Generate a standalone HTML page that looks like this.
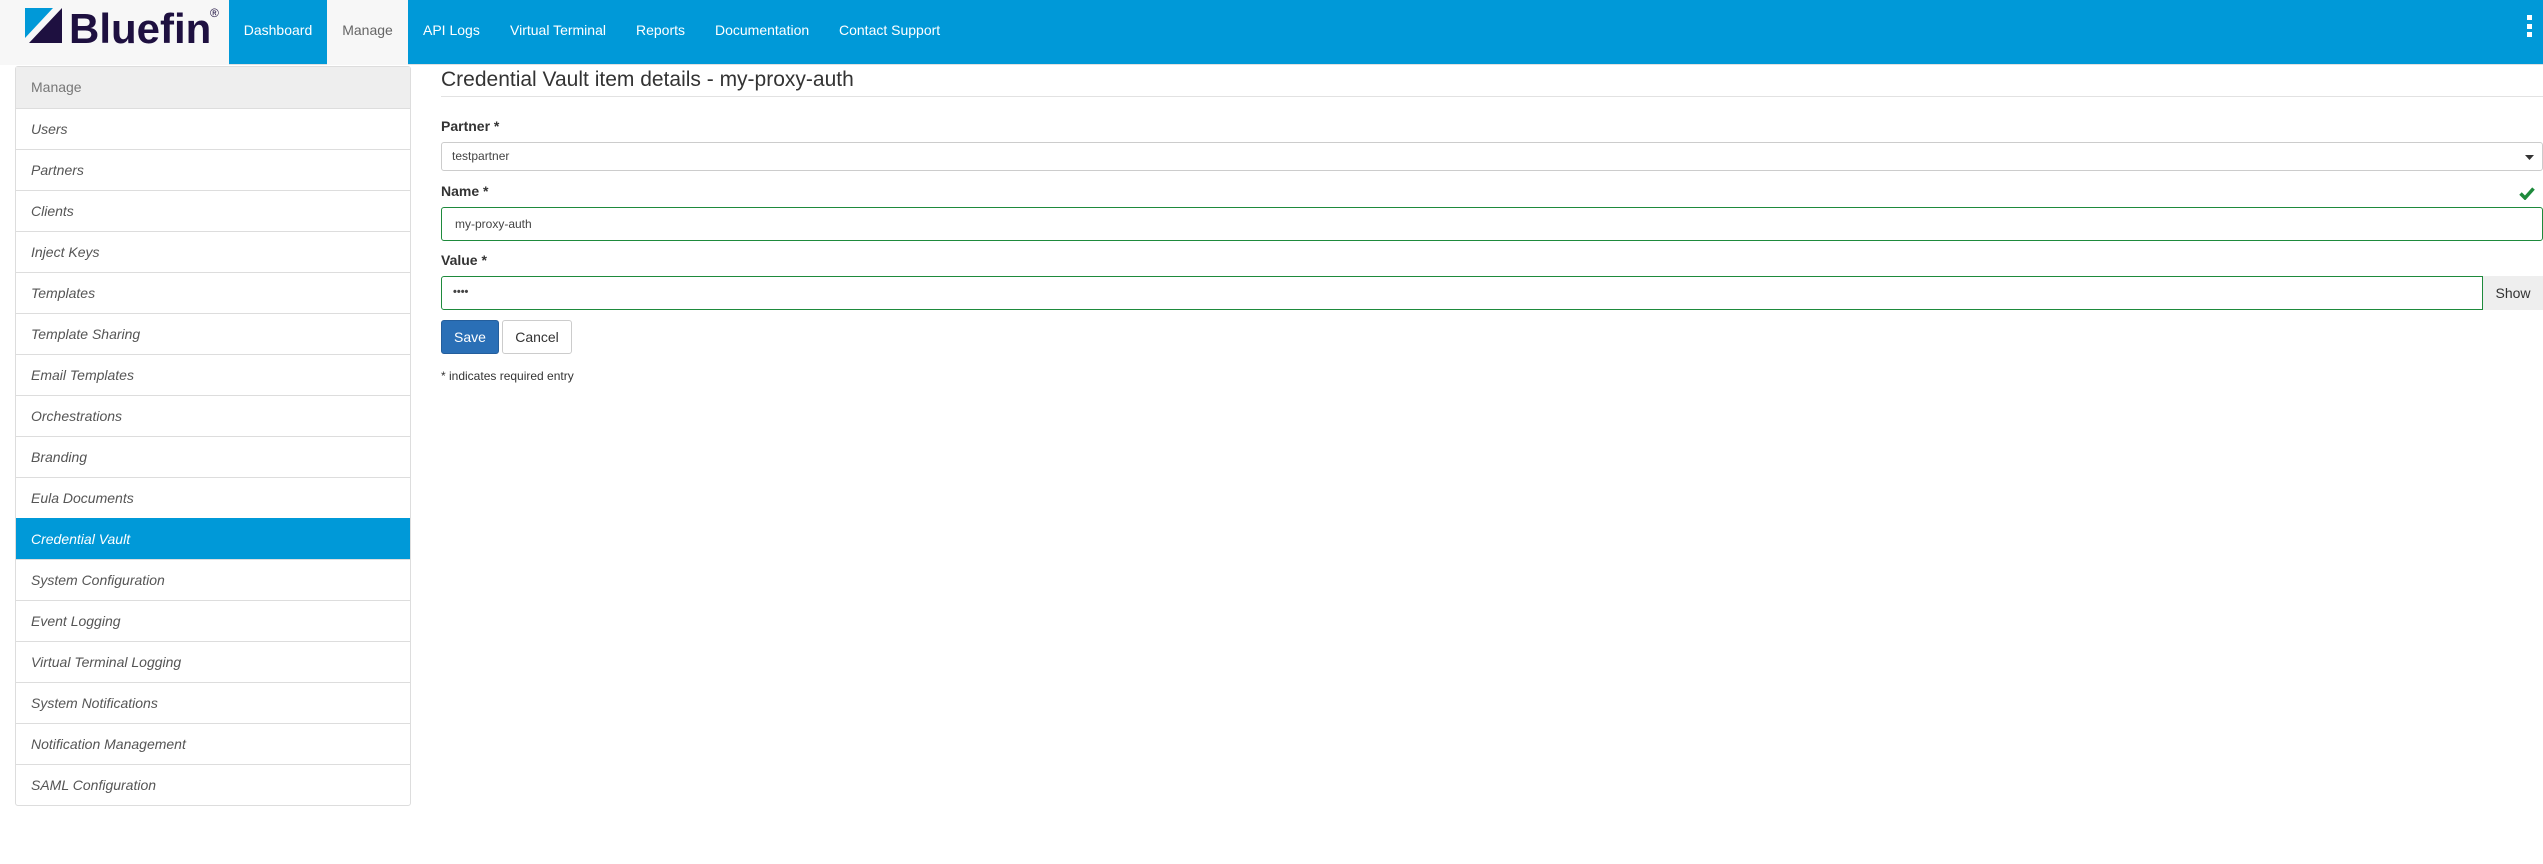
<!DOCTYPE html>
<html><head><meta charset="utf-8"><style>
*{box-sizing:border-box;margin:0;padding:0}
body{width:2543px;height:864px;background:#fff;font-family:"Liberation Sans",Arial,sans-serif;position:relative;overflow:hidden;color:#333}
.nav{position:absolute;left:0;top:0;width:2543px;height:65px;background:#0099d8;border-bottom:1px solid #e0e0e0}
.logo{position:absolute;left:0;top:0;width:229px;height:65px;background:#f7f7f7}
.brand{position:absolute;left:69px;top:5px;font-size:42px;font-weight:bold;color:#1e1040}
.reg{position:absolute;left:210px;top:6px;font-size:12px;color:#1e1040}
.ni{position:absolute;top:0;height:65px;line-height:60px;font-size:14px;color:#fff}
.manage{background:#f7f7f7;color:#666}
.dot{position:absolute;left:2527px;width:5px;height:5px;background:#fff}
.side{position:absolute;left:15px;top:66px;width:396px;border:1px solid #ddd;border-radius:3px}
.side div{height:41px;line-height:40px;padding-left:15px;font-size:14px;font-style:italic;color:#555;border-top:1px solid #ddd}
.side div:first-child{border-top:none;background:#eee;color:#777;font-style:normal}
.side div.act{background:#0099d8;color:#fff;border-color:#0099d8}
.title{position:absolute;left:441px;top:68px;font-size:21px;color:#333}
.hr{position:absolute;left:441px;top:96px;width:2102px;height:1px;background:#e2e2e2}
.lbl{position:absolute;left:441px;font-size:14px;font-weight:bold;color:#333}
.inp{position:absolute;left:441px;width:2102px;border:1px solid #ccc;border-radius:3px;font-size:12px;padding-left:11px;color:#444}
.ok{border-color:#1e8a3c}
.btn{position:absolute;top:320px;height:34px;line-height:32px;font-size:14px;border-radius:3px;text-align:center}
</style></head><body>
<div class="nav">
<div class="logo">
<svg style="position:absolute;left:25px;top:8px" width="37" height="35" viewBox="0 0 37 35"><polygon points="0,0 28,0 0,30" fill="#0099d8"/><polygon points="37,0 37,35 4,35" fill="#1e1040"/></svg>
<div class="brand">Bluefin</div><div class="reg">®</div>
</div>
<div class="ni" style="left:229px;width:98px;text-align:center">Dashboard</div>
<div class="ni manage" style="left:327px;width:81px;text-align:center">Manage</div>
<div class="ni" style="left:423px">API Logs</div>
<div class="ni" style="left:510px">Virtual Terminal</div>
<div class="ni" style="left:636px">Reports</div>
<div class="ni" style="left:715px">Documentation</div>
<div class="ni" style="left:839px">Contact Support</div>
<div class="dot" style="top:15px"></div><div class="dot" style="top:24px"></div><div class="dot" style="top:32px"></div>
</div>
<div class="side">
<div>Manage</div><div>Users</div><div>Partners</div><div>Clients</div><div>Inject Keys</div><div>Templates</div><div>Template Sharing</div><div>Email Templates</div><div>Orchestrations</div><div>Branding</div><div>Eula Documents</div><div class="act">Credential Vault</div><div>System Configuration</div><div>Event Logging</div><div>Virtual Terminal Logging</div><div>System Notifications</div><div>Notification Management</div><div>SAML Configuration</div>
</div>
<div class="title">Credential Vault item details - my-proxy-auth</div>
<div class="hr"></div>
<div class="lbl" style="top:118px">Partner *</div>
<div class="inp" style="top:142px;height:29px;line-height:27px;padding-left:10px">testpartner</div>
<svg style="position:absolute;left:2525px;top:155px" width="9" height="5"><polygon points="0,0 9,0 4.5,5" fill="#333"/></svg>
<div class="lbl" style="top:183px">Name *</div>
<svg style="position:absolute;left:2519px;top:187px" width="16" height="13" viewBox="0 0 16 13"><path d="M1.5 6.5 L6 11 L14.5 1.5" stroke="#1e8a3c" stroke-width="3.5" fill="none"/></svg>
<div class="inp ok" style="top:207px;height:34px;line-height:32px;padding-left:13px">my-proxy-auth</div>
<div class="lbl" style="top:252px">Value *</div>
<div class="inp ok" style="top:276px;height:34px;line-height:30px;width:2042px;border-radius:3px 0 0 3px;font-weight:bold;font-size:11px">••••</div>
<div style="position:absolute;left:2483px;top:276px;width:60px;height:34px;line-height:34px;background:#eee;text-align:center;font-size:14px;color:#333">Show</div>
<div class="btn" style="left:441px;width:58px;background:#2a6fb6;border:1px solid #245e9c;color:#fff">Save</div>
<div class="btn" style="left:502px;width:70px;background:#fff;border:1px solid #ccc;color:#333">Cancel</div>
<div style="position:absolute;left:441px;top:369px;font-size:12px;color:#333">* indicates required entry</div>
</body></html>
